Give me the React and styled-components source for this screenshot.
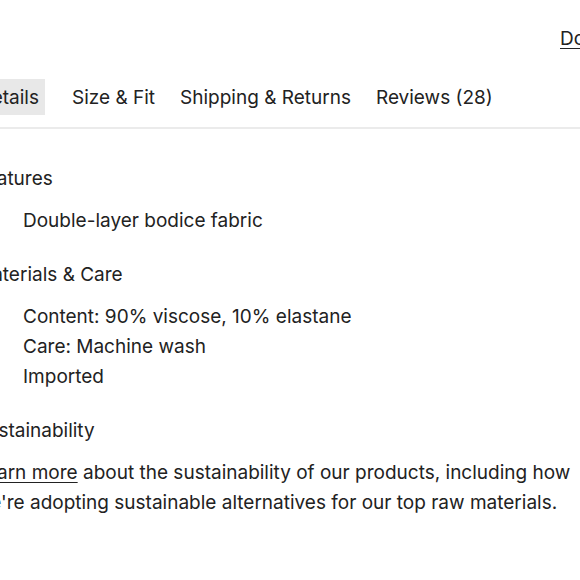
import React from 'react';
import styled, { createGlobalStyle } from 'styled-components';

const GlobalStyle = createGlobalStyle`
  html, body {
    margin: 0;
    padding: 0;
    background: #fff;
    overflow: hidden;
  }
  body {
    font-family: Inter, "Noto Sans", sans-serif;
    color: #222;
  }
`;

// Обертка страницы (слегка сдвинута влево, как в кадре)
const Page = styled.div`
  width: 720px;
  margin-left: -25px;
  padding-top: 29px;
`;

const TopBar = styled.div`
  display: flex;
  padding-left: 585px;
  height: 20px;
`;

const TopLink = styled.a`
  font-size: 19px;
  line-height: 20px;
  color: #222;
  text-decoration: underline;
  text-underline-offset: 3px;
  white-space: nowrap;
`;

const Tabs = styled.div`
  display: flex;
  gap: 13px;
  margin-top: 30px;
  padding-left: 0;
  border-bottom: 2px solid #ebebeb;
  padding-bottom: 12px;

  & > :first-child {
    margin-left: -3px;
  }
`;

const Tab = styled.button`
  border: 0;
  background: ${p => (p.$active ? '#e8e8e8' : 'transparent')};
  margin-right: ${p => (p.$active ? '8px' : '0')};
  font: inherit;
  font-size: 19px;
  line-height: 34px;
  height: 36px;
  padding: 2px 6px 0;
  color: #222;
  cursor: pointer;
`;

const Content = styled.div`
  padding-top: 35px;
`;

const Section = styled.section`
  margin-bottom: 24px;
`;

const Heading = styled.h4`
  margin: 0 0 12px;
  font-size: 19px;
  font-weight: 400;
  line-height: 30px;
`;

const List = styled.ul`
  margin: 0;
  padding-left: 48px;
  list-style: none;
`;

const Item = styled.li`
  font-size: 19px;
  line-height: 30px;
`;

const Text = styled.p`
  margin: 0;
  width: 640px;
  font-size: 19px;
  line-height: 30px;

  a {
    color: #222;
    text-decoration: underline;
    text-underline-offset: 3px;
  }
`;

const sections = [
  { title: 'Features', items: ['Double-layer bodice fabric'] },
  {
    title: 'Materials & Care',
    items: ['Content: 90% viscose, 10% elastane', 'Care: Machine wash', 'Imported'],
  },
];

const tabs = ['Details', 'Size & Fit', 'Shipping & Returns', 'Reviews (28)'];

export default function App() {
  return (
    <>
      <GlobalStyle />
      <Page>
        <TopBar>
          <TopLink href="#">Download</TopLink>
        </TopBar>
        <Tabs>
          {tabs.map((t, i) => (
            <Tab key={t} $active={i === 0}>{t}</Tab>
          ))}
        </Tabs>
        <Content>
          {sections.map(s => (
            <Section key={s.title}>
              <Heading>{s.title}</Heading>
              <List>
                {s.items.map(it => (
                  <Item key={it}>{it}</Item>
                ))}
              </List>
            </Section>
          ))}
          <Section>
            <Heading>Sustainability</Heading>
            <Text>
              <a href="#">Learn more</a> about the sustainability of our products, including how
              <br />
              we're adopting sustainable alternatives for our top raw materials.
            </Text>
          </Section>
        </Content>
      </Page>
    </>
  );
}
